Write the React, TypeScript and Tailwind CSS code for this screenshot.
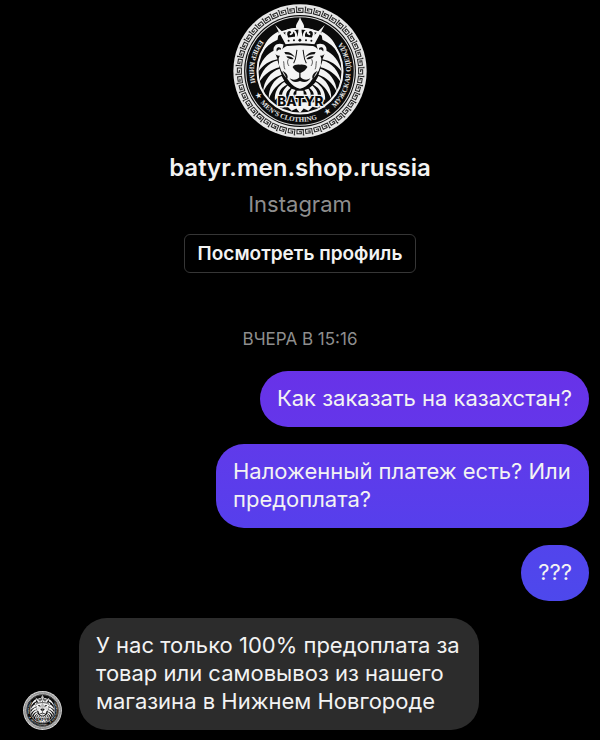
import { useId } from "react";

const KEY_COUNT = 44;

function LionHalf() {
  return (
    <g>
      <g fill="#f4f4f4">
        <path d="M162 94 C136 106 118 128 110 160 C122 142 138 128 158 120Z" />
        <path d="M148 152 C128 160 108 182 100 216 C116 194 134 182 158 178Z" />
        <path d="M158 182 C130 188 108 214 102 248 C120 220 140 208 164 202Z" />
        <path d="M164 206 C138 214 116 242 115 276 C128 248 146 232 170 224Z" />
        <path d="M170 228 C148 238 130 264 132 296 C142 270 156 254 178 242Z" />
        <path d="M178 246 C160 258 148 276 150 300 L162 288 C162 272 170 262 186 254Z" />
        <path d="M188 256 C176 268 170 278 172 290 L184 290 C182 276 190 270 197 264Z" />
        <path d="M200 266 C192 276 192 284 194 290 L206 290 C204 280 206 276 212 270Z" />
        <path d="M215 272 L213 290 L225 290 L225 272Z" />
        <path d="M176 134 C158 127 144 137 146 152 C148 164 158 170 168 166Z" />
        <path d="M225 136 L186 138 C172 144 163 155 164 170 C158 178 164 186 162 196 C168 202 166 212 174 218 C178 230 188 234 194 246 C202 256 212 264 225 266Z" />
      </g>
      <g fill="#111">
        <path d="M168 144 C159 138 152 146 156 155 C160 149 164 148 168 150Z" />
        <path d="M178 157 C190 154 204 160 210 173 C202 166 192 163 182 163Z" />
        <path d="M184 170 C192 168 200 170 206 177 C198 179 190 177 184 170Z" />
        <path d="M225 194 C214 193 207 195 203 201 C206 206 212 215 225 219Z" />
        <path d="M225 230 C216 240 204 242 194 235 C200 246 212 249 225 243Z" />
        <path d="M172 212 C180 222 184 230 185 240 C192 230 188 220 172 212Z" />
      </g>
      <g fill="none" stroke="#111" strokeWidth="3">
        <path d="M216 150 C213 160 216 172 206 190" />
        <path d="M225 215 V232" />
        <path d="M176 184 C178 194 176 200 180 208" strokeWidth="2" />
        <path d="M190 178 C186 186 188 192 192 198" strokeWidth="2" />
      </g>
      <g fill="#f4f4f4">
        <path d="M182 133 L151 76 L190 113 Q207 110 225 110 V131 Q202 130 182 133Z" />
        <path d="M225 52 C222 64 214 70 213 79 C212 86 217 88 220 86 C221 94 219 104 216 112 L225 112Z" />
      </g>
      <path
        d="M186 112 C180 98 186 90 195 91 C203 92 204 101 197 103 M213 112 C215 98 208 91 200 92"
        fill="none"
        stroke="#f4f4f4"
        strokeWidth="6"
        strokeLinecap="round"
      />
      <g fill="#111">
        <circle cx="207" cy="121" r="3" />
        <circle cx="225" cy="121" r="4" />
        <circle cx="191" cy="123" r="3" />
      </g>
      <path d="M183 136 Q203 133 225 133" fill="none" stroke="#111" strokeWidth="2" />
    </g>
  );
}

function Logo({ className }: { className: string }) {
  const ring = useId();
  return (
    <svg viewBox="25 13 400 400" className={className} role="img" aria-label="BATYR">
      <circle cx="225" cy="213" r="199" fill="#e6e6e6" />
      {Array.from({ length: KEY_COUNT }, (_, i) => (
        <path
          key={i}
          d="M-13 22 H-10 V38 H9 V26 H-4 V32 H3"
          transform={`rotate(${(i * 360) / KEY_COUNT} 225 213) translate(225 0)`}
          fill="none"
          stroke="#222"
          strokeWidth="3"
        />
      ))}
      <circle cx="225" cy="213" r="167" fill="#0b0b0b" />
      <circle cx="225" cy="213" r="162" fill="none" stroke="#ddd" strokeWidth="3" />
      <circle cx="225" cy="213" r="127" fill="#0b0b0b" stroke="#f4f4f4" strokeWidth="6" />
      <LionHalf />
      <g transform="translate(450 0) scale(-1 1)">
        <LionHalf />
      </g>
      <path
        d="M158 306 H292 L280 323 L262 320 L250 332 L236 325 L225 338 L214 325 L200 332 L188 320 L170 323Z"
        fill="#f4f4f4"
      />
      <text
        x="226"
        y="317"
        textAnchor="middle"
        fontSize="40"
        fill="#0b0b0b"
        stroke="#f4f4f4"
        strokeWidth="7"
        paintOrder="stroke"
        className="font-['Inter',sans-serif] font-extrabold"
      >
        BATYR
      </text>
      <path id={ring} d="M109 117 A151 151 0 1 0 341 117" fill="none" />
      <g fill="#e5e5e5" fontSize="21" className="font-['Liberation_Serif',serif] font-bold">
        <text>
          <textPath href={`#${ring}`} startOffset="4">ЕРЛЕР КИІМІ</textPath>
        </text>
        <text>
          <textPath href={`#${ring}`} startOffset="176">★</textPath>
        </text>
        <text>
          <textPath href={`#${ring}`} startOffset="206">MEN’S CLOTHING</textPath>
        </text>
        <text>
          <textPath href={`#${ring}`} startOffset="424">★</textPath>
        </text>
        <text>
          <textPath href={`#${ring}`} startOffset="456">МУЖСКАЯ ОДЕЖДА</textPath>
        </text>
      </g>
    </svg>
  );
}

const sent = [
  { text: "Как заказать на казахстан?", tone: "from-[#6832e8] to-[#6436ea]" },
  { text: "Наложенный платеж есть? Или предоплата?", tone: "from-[#603aea] to-[#563fec]" },
  { text: "???", tone: "from-[#5244ec] to-[#4d48ec]" },
];

export default function App() {
  return (
    <main className="flex min-h-screen flex-col bg-black pt-1 pb-2.5 font-['Inter','Noto_Sans',sans-serif] text-[#f3f3f3]">
      <header className="flex flex-col items-center">
        <Logo className="size-[134px]" />
        <h1 className="mt-4 text-2xl leading-7 font-semibold">batyr.men.shop.russia</h1>
        <p className="mt-2 text-[22px] leading-7 text-[#8e8e8e]">Instagram</p>
        <button
          type="button"
          className="mt-4 h-[39px] rounded-md border border-[#363636] px-[13px] text-[19px] leading-7 font-semibold"
        >
          Посмотреть профиль
        </button>
      </header>

      <section className="mt-[52px] flex flex-col gap-[17px] pr-[11px] pl-[23px] text-[22px] leading-7">
        <time className="mb-px -ml-3 text-center text-[17px] text-[#8e8e8e]">ВЧЕРА В 15:16</time>
        {sent.map((m) => (
          <p
            key={m.text}
            className={`max-w-[373px] self-end rounded-[28px] bg-linear-to-b px-[17px] pt-[13px] pb-[15px] ${m.tone}`}
          >
            {m.text}
          </p>
        ))}
        <div className="flex items-end gap-[17px]">
          <Logo className="size-[39px] shrink-0" />
          <p className="max-w-[400px] rounded-[28px] bg-[#2c2c2c] px-[17px] pt-[13px] pb-[15px]">
            У нас только 100% предоплата за товар или самовывоз из нашего магазина в Нижнем Новгороде
          </p>
        </div>
      </section>
    </main>
  );
}
